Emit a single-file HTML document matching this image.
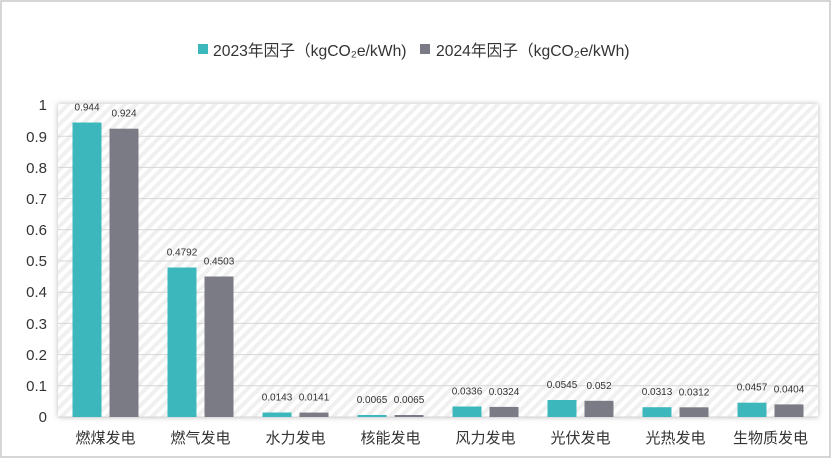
<!DOCTYPE html>
<html><head><meta charset="utf-8"><style>
html,body{margin:0;padding:0;background:#fff;}
svg{display:block;font-family:"Liberation Sans","Noto Sans CJK SC",sans-serif;}
</style></head><body>
<svg width="832" height="459" viewBox="0 0 832 459" xmlns="http://www.w3.org/2000/svg">
<defs>
<pattern id="hatch" width="8" height="8" patternUnits="userSpaceOnUse" patternTransform="rotate(45)">
<rect width="8" height="8" fill="#fff"/><rect width="4" height="8" fill="#f0f0f0"/>
</pattern>
<filter id="sh" x="-5%" y="-5%" width="110%" height="110%"><feGaussianBlur stdDeviation="3"/></filter>
</defs>
<rect x="1" y="1" width="829" height="456" fill="#fff" stroke="#c8c8c8" stroke-width="1.5"/>
<rect x="58" y="104" width="760" height="313" fill="#bbb" filter="url(#sh)"/>
<rect x="58" y="104" width="760" height="313" fill="url(#hatch)"/>
<g stroke="#d6d6d6" stroke-width="1">
<line x1="58" x2="818" y1="136.2" y2="136.2"/><line x1="58" x2="818" y1="167.4" y2="167.4"/>
<line x1="58" x2="818" y1="198.6" y2="198.6"/><line x1="58" x2="818" y1="229.8" y2="229.8"/>
<line x1="58" x2="818" y1="261" y2="261"/><line x1="58" x2="818" y1="292.2" y2="292.2"/>
<line x1="58" x2="818" y1="323.4" y2="323.4"/><line x1="58" x2="818" y1="354.6" y2="354.6"/>
<line x1="58" x2="818" y1="385.8" y2="385.8"/><line x1="58" x2="818" y1="417" y2="417"/>
</g>
<g font-size="15" fill="#333" text-anchor="end">
<text x="47" y="110">1</text><text x="47" y="142">0.9</text><text x="47" y="173">0.8</text>
<text x="47" y="204">0.7</text><text x="47" y="235">0.6</text><text x="47" y="266">0.5</text>
<text x="47" y="297">0.4</text><text x="47" y="329">0.3</text><text x="47" y="360">0.2</text>
<text x="47" y="391">0.1</text><text x="47" y="422">0</text>
</g>
<g font-size="15.7" fill="#333">
<rect x="198" y="44" width="10" height="10" fill="#3cb8bd"/><text x="213" y="56">2023年因子（kgCO₂e/kWh)</text>
<rect x="420" y="44" width="10" height="10" fill="#7a7b84"/><text x="436" y="56">2024年因子（kgCO₂e/kWh)</text>
</g>
<g fill="#3cb8bd">
<rect x="72.5" y="122.5" width="29" height="294.5"/>
<rect x="167.5" y="267.5" width="29" height="149.5"/>
<rect x="262.5" y="412.5" width="29" height="4.5"/>
<rect x="357.5" y="415" width="29" height="2"/>
<rect x="452.5" y="406.5" width="29" height="10.5"/>
<rect x="547.5" y="400" width="29" height="17"/>
<rect x="642.5" y="407.2" width="29" height="9.8"/>
<rect x="737.5" y="402.7" width="29" height="14.3"/>
</g>
<g fill="#7a7b84">
<rect x="109.5" y="128.7" width="29" height="288.3"/>
<rect x="204.5" y="276.5" width="29" height="140.5"/>
<rect x="299.5" y="412.6" width="29" height="4.4"/>
<rect x="394.5" y="415" width="29" height="2"/>
<rect x="489.5" y="406.9" width="29" height="10.1"/>
<rect x="584.5" y="400.8" width="29" height="16.2"/>
<rect x="679.5" y="407.3" width="29" height="9.7"/>
<rect x="774.5" y="404.4" width="29" height="12.6"/>
</g>
<g font-size="10" fill="#333" text-anchor="middle">
<text x="87" y="110.5">0.944</text><text x="124" y="116.7">0.924</text>
<text x="182" y="255.5">0.4792</text><text x="219" y="264.5">0.4503</text>
<text x="277" y="400.5">0.0143</text><text x="314" y="400.6">0.0141</text>
<text x="372" y="403">0.0065</text><text x="409" y="403">0.0065</text>
<text x="467" y="394.5">0.0336</text><text x="504" y="394.9">0.0324</text>
<text x="562" y="388">0.0545</text><text x="599" y="388.8">0.052</text>
<text x="657" y="395.2">0.0313</text><text x="694" y="395.3">0.0312</text>
<text x="752" y="390.7">0.0457</text><text x="789" y="392.4">0.0404</text>
</g>
<g font-size="15" fill="#333" text-anchor="middle">
<text x="105.5" y="443">燃煤发电</text><text x="200.5" y="443">燃气发电</text>
<text x="295.5" y="443">水力发电</text><text x="390.5" y="443">核能发电</text>
<text x="485.5" y="443">风力发电</text><text x="580.5" y="443">光伏发电</text>
<text x="675.5" y="443">光热发电</text><text x="770.5" y="443">生物质发电</text>
</g>
</svg>
</body></html>
